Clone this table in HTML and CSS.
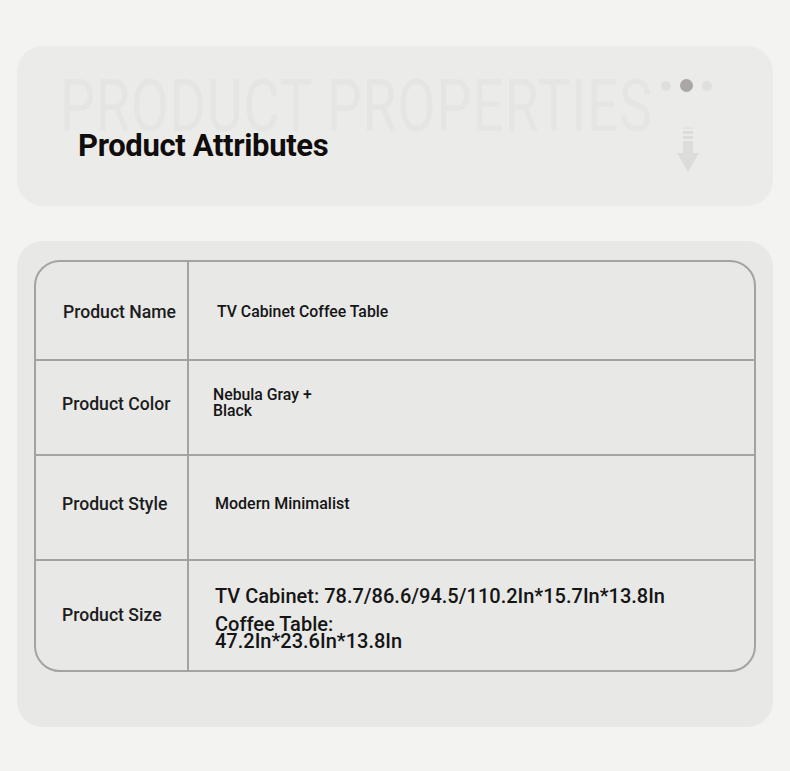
FILE: index.html
```html
<!DOCTYPE html>
<html>
<head>
<meta charset="utf-8">
<link rel="stylesheet" href="styles.css">
</head>
<body>
<div class="page">
  <section class="head-card">
    <div class="ghost">PRODUCT PROPERTIES</div>
    <h1 class="title">Product Attributes</h1>
    <div class="dots"><span class="dot"></span><span class="dot on"></span><span class="dot"></span></div>
    <svg class="arrow" width="24" height="50" viewBox="0 0 24 50">
      <rect x="7" y="2" width="10" height="2" fill="#e4e4e2"/>
      <rect x="7" y="6" width="10" height="3" fill="#dcdcda"/>
      <rect x="7" y="11" width="10" height="3" fill="#dcdcda"/>
      <rect x="7" y="16" width="10" height="14" fill="#dcdcda"/>
      <path d="M1 28 L23 28 L12 47 Z" fill="#dcdcda"/>
    </svg>
  </section>
  <section class="body-card">
    <div class="table">
      <div class="row r1">
        <div class="label">Product Name</div>
        <div class="value v1">TV Cabinet Coffee Table</div>
      </div>
      <div class="row r2">
        <div class="label">Product Color</div>
        <div class="value v2">Nebula Gray +<br>Black</div>
      </div>
      <div class="row r3">
        <div class="label">Product Style</div>
        <div class="value v3">Modern Minimalist</div>
      </div>
      <div class="row r4">
        <div class="label">Product Size</div>
        <div class="value v4">
          <p class="l1">TV Cabinet: 78.7/86.6/94.5/110.2In*15.7In*13.8In</p>
          <p class="l2">Coffee Table:<br>47.2In*23.6In*13.8In</p>
        </div>
      </div>
    </div>
  </section>
</div>
</body>
</html>
```
FILE: styles.css
```css
html, body { margin: 0; padding: 0; }
body {
  background: #f3f3f2;
  font-family: Roboto, "Liberation Sans", sans-serif;
  color: #1a1a1a;
  width: 790px;
  height: 771px;
  overflow: hidden;
}
.page { padding: 46px 17px 0 17px; }
.head-card {
  position: relative;
  height: 160px;
  background: #ebebe9;
  border-radius: 26px;
  overflow: hidden;
}
.ghost {
  position: absolute;
  left: 43px;
  top: 18px;
  font-size: 72px;
  font-weight: 400;
  color: #e5e5e3;
  white-space: nowrap;
  transform: scaleX(0.77);
  transform-origin: left top;
  letter-spacing: 1px;
}
.title {
  position: relative;
  margin: 0;
  padding: 82px 0 0 61px;
  font-size: 31px;
  line-height: 36px;
  font-weight: 700;
  letter-spacing: -0.35px;
  color: #110d0d;
}
.dots {
  position: absolute;
  left: 644px;
  top: 33px;
  display: flex;
  align-items: center;
  gap: 9px;
}
.dot { width: 10px; height: 10px; border-radius: 50%; background: #e0dfdd; }
.dot.on { width: 13px; height: 13px; background: #aaa6a3; }
.arrow { position: absolute; left: 659px; top: 79px; }

.body-card {
  margin-top: 35px;
  height: 486px;
  background: #e8e8e7;
  border-radius: 26px;
  padding: 19px 17px 0 17px;
  box-sizing: border-box;
}
.table {
  border: 2px solid #a3a3a3;
  border-radius: 26px;
  overflow: hidden;
}
.row {
  display: grid;
  grid-template-columns: 153px 1fr;
  border-top: 2px solid #a3a3a3;
}
.row.r1 { border-top: none; height: 97px; }
.row.r2 { height: 93px; }
.row.r3 { height: 103px; }
.row.r4 { height: 109px; }
.label {
  border-right: 2px solid #a3a3a3;
  display: flex;
  align-items: center;
  padding-left: 27px;
  font-size: 17.6px;
  font-weight: 500;
  color: #1c1c1c;
}
.r2 .label, .r3 .label, .r4 .label { padding-left: 26px; }
.r1 .label { padding-top: 2px; }
.r2 .label { padding-bottom: 7px; }
.r3 .label { padding-bottom: 8px; }
.r4 .label { padding-bottom: 2px; }
.value {
  display: flex;
  flex-direction: column;
  justify-content: center;
  font-weight: 500;
  color: #151515;
}
.v1 { padding-left: 28px; font-size: 15.8px; padding-top: 2px; }
.v2 { padding-left: 24px; font-size: 15.8px; line-height: 16px; padding-bottom: 10px; }
.v3 { padding-left: 26px; font-size: 16px; padding-bottom: 8px; }
.v4 { padding-left: 26px; font-size: 20px; padding-top: 3px; }
.v4 p { margin: 0; }
.v4 .l1 { line-height: 22px; }
.v4 .l2 { line-height: 17px; margin-top: 9px; }
```
